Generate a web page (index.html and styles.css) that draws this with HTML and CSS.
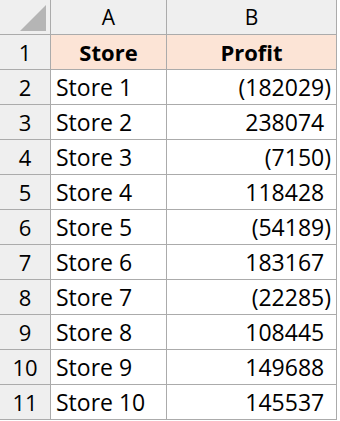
FILE: index.html
```html
<!DOCTYPE html>
<html lang="en">
<head>
    <meta charset="UTF-8">
    <title>Store profit</title>
    <link rel="stylesheet" href="styles.css">
</head>
<body>
<div class="sheet">
    <div class="corner">
        <svg width="50" height="34" viewBox="0 0 50 34"><polygon points="46,5 46,31 20,31" fill="#b5b5b5"/></svg>
    </div>
    <div class="col-head">A</div>
    <div class="col-head">B</div>

    <div class="row-head">1</div>
    <div class="cell title">Store</div>
    <div class="cell title">Profit</div>

    <div class="row-head">2</div>
    <div class="cell">Store 1</div>
    <div class="cell num">(182029)</div>

    <div class="row-head">3</div>
    <div class="cell">Store 2</div>
    <div class="cell num">238074<span class="pad">)</span></div>

    <div class="row-head">4</div>
    <div class="cell">Store 3</div>
    <div class="cell num">(7150)</div>

    <div class="row-head">5</div>
    <div class="cell">Store 4</div>
    <div class="cell num">118428<span class="pad">)</span></div>

    <div class="row-head">6</div>
    <div class="cell">Store 5</div>
    <div class="cell num">(54189)</div>

    <div class="row-head">7</div>
    <div class="cell">Store 6</div>
    <div class="cell num">183167<span class="pad">)</span></div>

    <div class="row-head">8</div>
    <div class="cell">Store 7</div>
    <div class="cell num">(22285)</div>

    <div class="row-head">9</div>
    <div class="cell">Store 8</div>
    <div class="cell num">108445<span class="pad">)</span></div>

    <div class="row-head">10</div>
    <div class="cell">Store 9</div>
    <div class="cell num">149688<span class="pad">)</span></div>

    <div class="row-head">11</div>
    <div class="cell">Store 10</div>
    <div class="cell num">145537<span class="pad">)</span></div>
</div>
</body>
</html>
```

FILE: styles.css
```css
* {
    box-sizing: border-box;
}

body {
    margin: 0;
    background: #ffffff;
    font-family: 'Open Sans', sans-serif;
    color: #000000;
}

.sheet {
    display: grid;
    grid-template-columns: 51px 116px 170px;
    grid-auto-rows: 35px;
    width: 337px;
}

.sheet > div {
    border-right: 1px solid #ababab;
    border-bottom: 1px solid #ababab;
    display: flex;
    align-items: center;
    white-space: nowrap;
}

.corner {
    background: #efefef;
}

.col-head {
    background: #efefef;
    justify-content: center;
    font-size: 21px;
}

.row-head {
    background: #efefef;
    justify-content: center;
    font-size: 22px;
}

.cell {
    font-size: 23px;
    padding: 0 5px;
}

.title {
    background: #fce4d6;
    justify-content: center;
    font-weight: bold;
    font-size: 22px;
}

.num {
    justify-content: flex-end;
}

.pad {
    visibility: hidden;
}
```
